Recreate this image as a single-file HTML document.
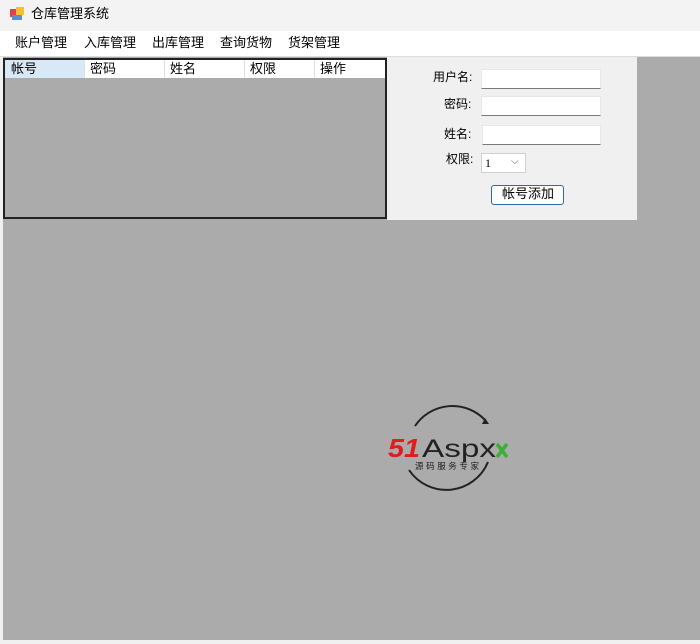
<!DOCTYPE html>
<html><head><style>
body{margin:0;width:700px;height:644px;overflow:hidden;background:#ababab;font-family:"Liberation Sans","Noto Sans CJK SC",sans-serif;font-size:12px;color:#000;position:relative}
div{position:absolute;box-sizing:border-box}
.t{white-space:nowrap;line-height:16px}
.in{background:#fff;border-bottom:1px solid #7a7a7a;border-top:1px solid #e8e8e8;border-left:1px solid #e8e8e8;border-right:1px solid #e8e8e8}
</style></head><body>
<div style="left:0;top:0;width:700px;height:31px;background:#f3f3f3"></div>
<div style="left:10px;top:9px;width:7px;height:8px;background:#d44"></div>
<div style="left:16px;top:7px;width:8px;height:8px;background:#f2c230"></div>
<div style="left:12px;top:15px;width:10px;height:5px;background:#5a8fd6"></div>
<div class="t" style="left:31px;top:6px;font-size:13px">仓库管理系统</div>
<div style="left:0;top:31px;width:700px;height:26px;background:#fff;border-bottom:1px solid #ddd"></div>
<div class="t" style="left:15px;top:35px;font-size:13px">账户管理</div>
<div class="t" style="left:84px;top:35px;font-size:13px">入库管理</div>
<div class="t" style="left:152px;top:35px;font-size:13px">出库管理</div>
<div class="t" style="left:220px;top:35px;font-size:13px">查询货物</div>
<div class="t" style="left:288px;top:35px;font-size:13px">货架管理</div>
<div style="left:0;top:57px;width:3px;height:587px;background:#f0f0f0"></div>
<div style="left:0;top:640px;width:700px;height:4px;background:#f0f0f0"></div>
<div style="left:3px;top:58px;width:384px;height:161px;border:2px solid #222;background:#ababab"></div>
<div style="left:5px;top:60px;width:380px;height:18px;background:#fff"></div>
<div style="left:5px;top:60px;width:79px;height:18px;background:#d9e8f7"></div>
<div style="left:164px;top:60px;width:1px;height:18px;background:#e0e0e0"></div>
<div style="left:244px;top:60px;width:1px;height:18px;background:#e0e0e0"></div>
<div style="left:314px;top:60px;width:1px;height:18px;background:#e0e0e0"></div>
<div style="left:84px;top:60px;width:1px;height:18px;background:#e0e0e0"></div>
<div class="t" style="left:11px;top:61px;font-size:13px">帐号</div>
<div class="t" style="left:90px;top:61px;font-size:13px">密码</div>
<div class="t" style="left:170px;top:61px;font-size:13px">姓名</div>
<div class="t" style="left:250px;top:61px;font-size:13px">权限</div>
<div class="t" style="left:320px;top:61px;font-size:13px">操作</div>
<div style="left:387px;top:57px;width:250px;height:163px;background:#f0f0f0"></div>
<div class="t" style="left:433px;top:69px">用户名:</div>
<div class="in" style="left:481px;top:69px;width:120px;height:20px"></div>
<div class="t" style="left:444px;top:96px">密码:</div>
<div class="in" style="left:481px;top:96px;width:120px;height:20px"></div>
<div class="t" style="left:444px;top:126px">姓名:</div>
<div class="in" style="left:482px;top:125px;width:119px;height:20px"></div>
<div class="t" style="left:446px;top:151px">权限:</div>
<div style="left:481px;top:153px;width:45px;height:20px;background:#fff;border:1px solid #d0d0d0"></div>
<div class="t" style="left:485px;top:155px;font-family:'Liberation Serif',serif">1</div>
<div class="t" style="left:511px;top:154px;font-size:10px;color:#666">⌵</div>
<div style="left:491px;top:185px;width:73px;height:20px;border:1px solid #2a6ab0;border-radius:3px;background:#fdfdfd"></div>
<div class="t" style="left:502px;top:186px;font-size:13px">帐号添加</div>
<svg style="position:absolute;left:385px;top:400px" width="130" height="95" viewBox="0 0 130 95">
<path d="M30 26 A45 45 0 0 1 100 20" fill="none" stroke="#222" stroke-width="2"/>
<path d="M103 62 A45 45 0 0 1 24 70" fill="none" stroke="#222" stroke-width="2"/>
<path d="M100 18 l4 6 l-7 0z" fill="#222"/>
<text x="3" y="57" font-family="Liberation Sans" font-style="italic" font-weight="bold" font-size="26" fill="#e31b1b" textLength="32" lengthAdjust="spacingAndGlyphs">51</text>
<text x="37" y="57" font-family="Liberation Sans" font-size="25" fill="#222" textLength="74" lengthAdjust="spacingAndGlyphs">Aspx</text>
<path d="M112 44 l10 13 M122 44 l-10 13" stroke="#3cb034" stroke-width="3.5"/>
<text x="30" y="69" font-family="Noto Sans CJK SC" font-size="8.5" fill="#222" textLength="64">源码服务专家</text>
</svg>
</body></html>
